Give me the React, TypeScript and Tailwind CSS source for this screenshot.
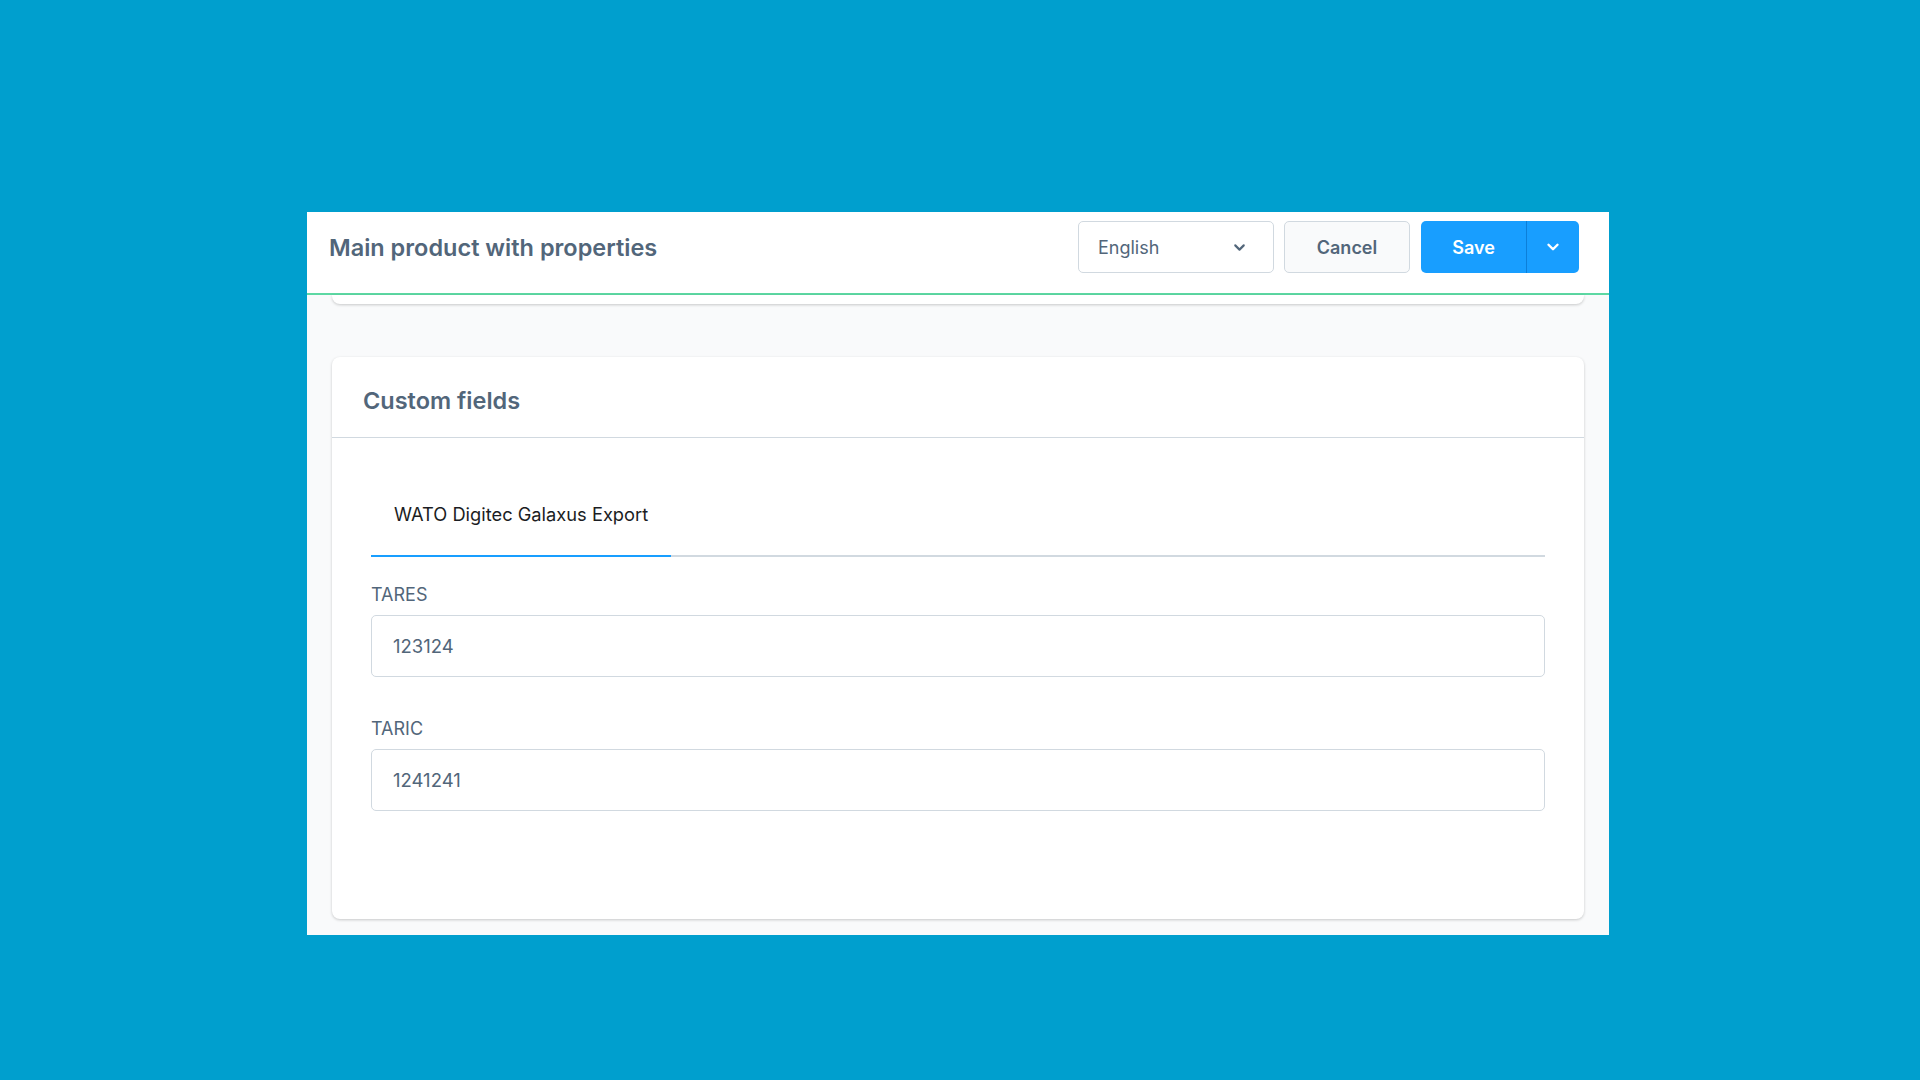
import { ChevronDown } from "lucide-react";

const fields = [
  { label: "TARES", value: "123124" },
  { label: "TARIC", value: "1241241" },
];

export default function App() {
  return (
    <div className="min-h-screen w-full bg-[#009fce] pl-[307px] pt-[212px] font-['Inter',sans-serif]">
      <div className="flex h-[723px] w-[1302px] flex-col bg-[#f9fafb]">
        {/* smart bar */}
        <div className="flex h-[83px] items-start justify-between border-b-2 border-[#5dd8a3] bg-white pl-[22px] pr-[30px] pt-[9px]">
          <div className="flex h-[52px] items-center pt-[2px]">
            <h1 className="text-[23.5px] font-semibold text-[#52667a]">
              Main product with properties
            </h1>
          </div>
          <div className="flex items-center">
            <button
              type="button"
              className="flex h-[52px] w-[196px] items-center justify-between rounded-[5px] border border-[#d1d9e0] bg-white pl-[19px] pr-[25px] text-[18px] text-[#52667a]"
            >
              <span>English</span>
              <ChevronDown className="h-[17px] w-[17px]" strokeWidth={3} />
            </button>
            <button
              type="button"
              className="ml-[10px] flex h-[52px] w-[126px] items-center justify-center rounded-[5px] border border-[#d1d9e0] bg-[#f9fafb] text-[18px] font-semibold text-[#52667a]"
            >
              Cancel
            </button>
            <div className="ml-[11px] flex h-[52px] overflow-hidden rounded-[5px] bg-[#189eff] text-white">
              <button
                type="button"
                className="flex w-[105px] items-center justify-center text-[18px] font-semibold"
              >
                Save
              </button>
              <div className="w-px bg-[#0c7fd9]" />
              <button type="button" className="flex w-[52px] items-center justify-center">
                <ChevronDown className="h-[18px] w-[18px]" strokeWidth={3.2} />
              </button>
            </div>
          </div>
        </div>

        <div className="flex flex-1 flex-col px-[25px]">
          {/* bottom of the card above */}
          <div className="h-[9px] rounded-b-[8px] bg-white shadow-[0_1px_3px_0_rgba(0,0,0,0.2)]" />

          <div className="mt-[53px] flex h-[562px] flex-col rounded-[8px] bg-white shadow-[0_1px_3px_0_rgba(0,0,0,0.2)]">
            <div className="flex h-[81px] items-center border-b border-[#d1d9e0] px-[31px] pt-[8px]">
              <h2 className="text-[23.5px] font-semibold text-[#52667a]">Custom fields</h2>
            </div>

            <div className="px-[39px] pt-[37px]">
              <div className="flex border-b-2 border-[#d1d9e0]">
                <div className="-mb-[2px] flex h-[82px] items-center border-b-2 border-[#189eff] px-[23px] text-[18.3px] text-[#1b1d23]">
                  WATO Digitec Galaxus Export
                </div>
              </div>

              <div className="pt-[26px]">
                {fields.map((field, index) => (
                  <div key={field.label} className={index > 0 ? "mt-[40px]" : ""}>
                    <label className="mb-[8px] block text-[18px] leading-[24px] text-[#52667a]">
                      {field.label}
                    </label>
                    <div className="flex h-[62px] items-center rounded-[5px] border border-[#d1d9e0] bg-white px-[21px] pt-[2px] text-[18.5px] text-[#52667a]">
                      {field.value}
                    </div>
                  </div>
                ))}
              </div>
            </div>
          </div>
        </div>
      </div>
    </div>
  );
}
